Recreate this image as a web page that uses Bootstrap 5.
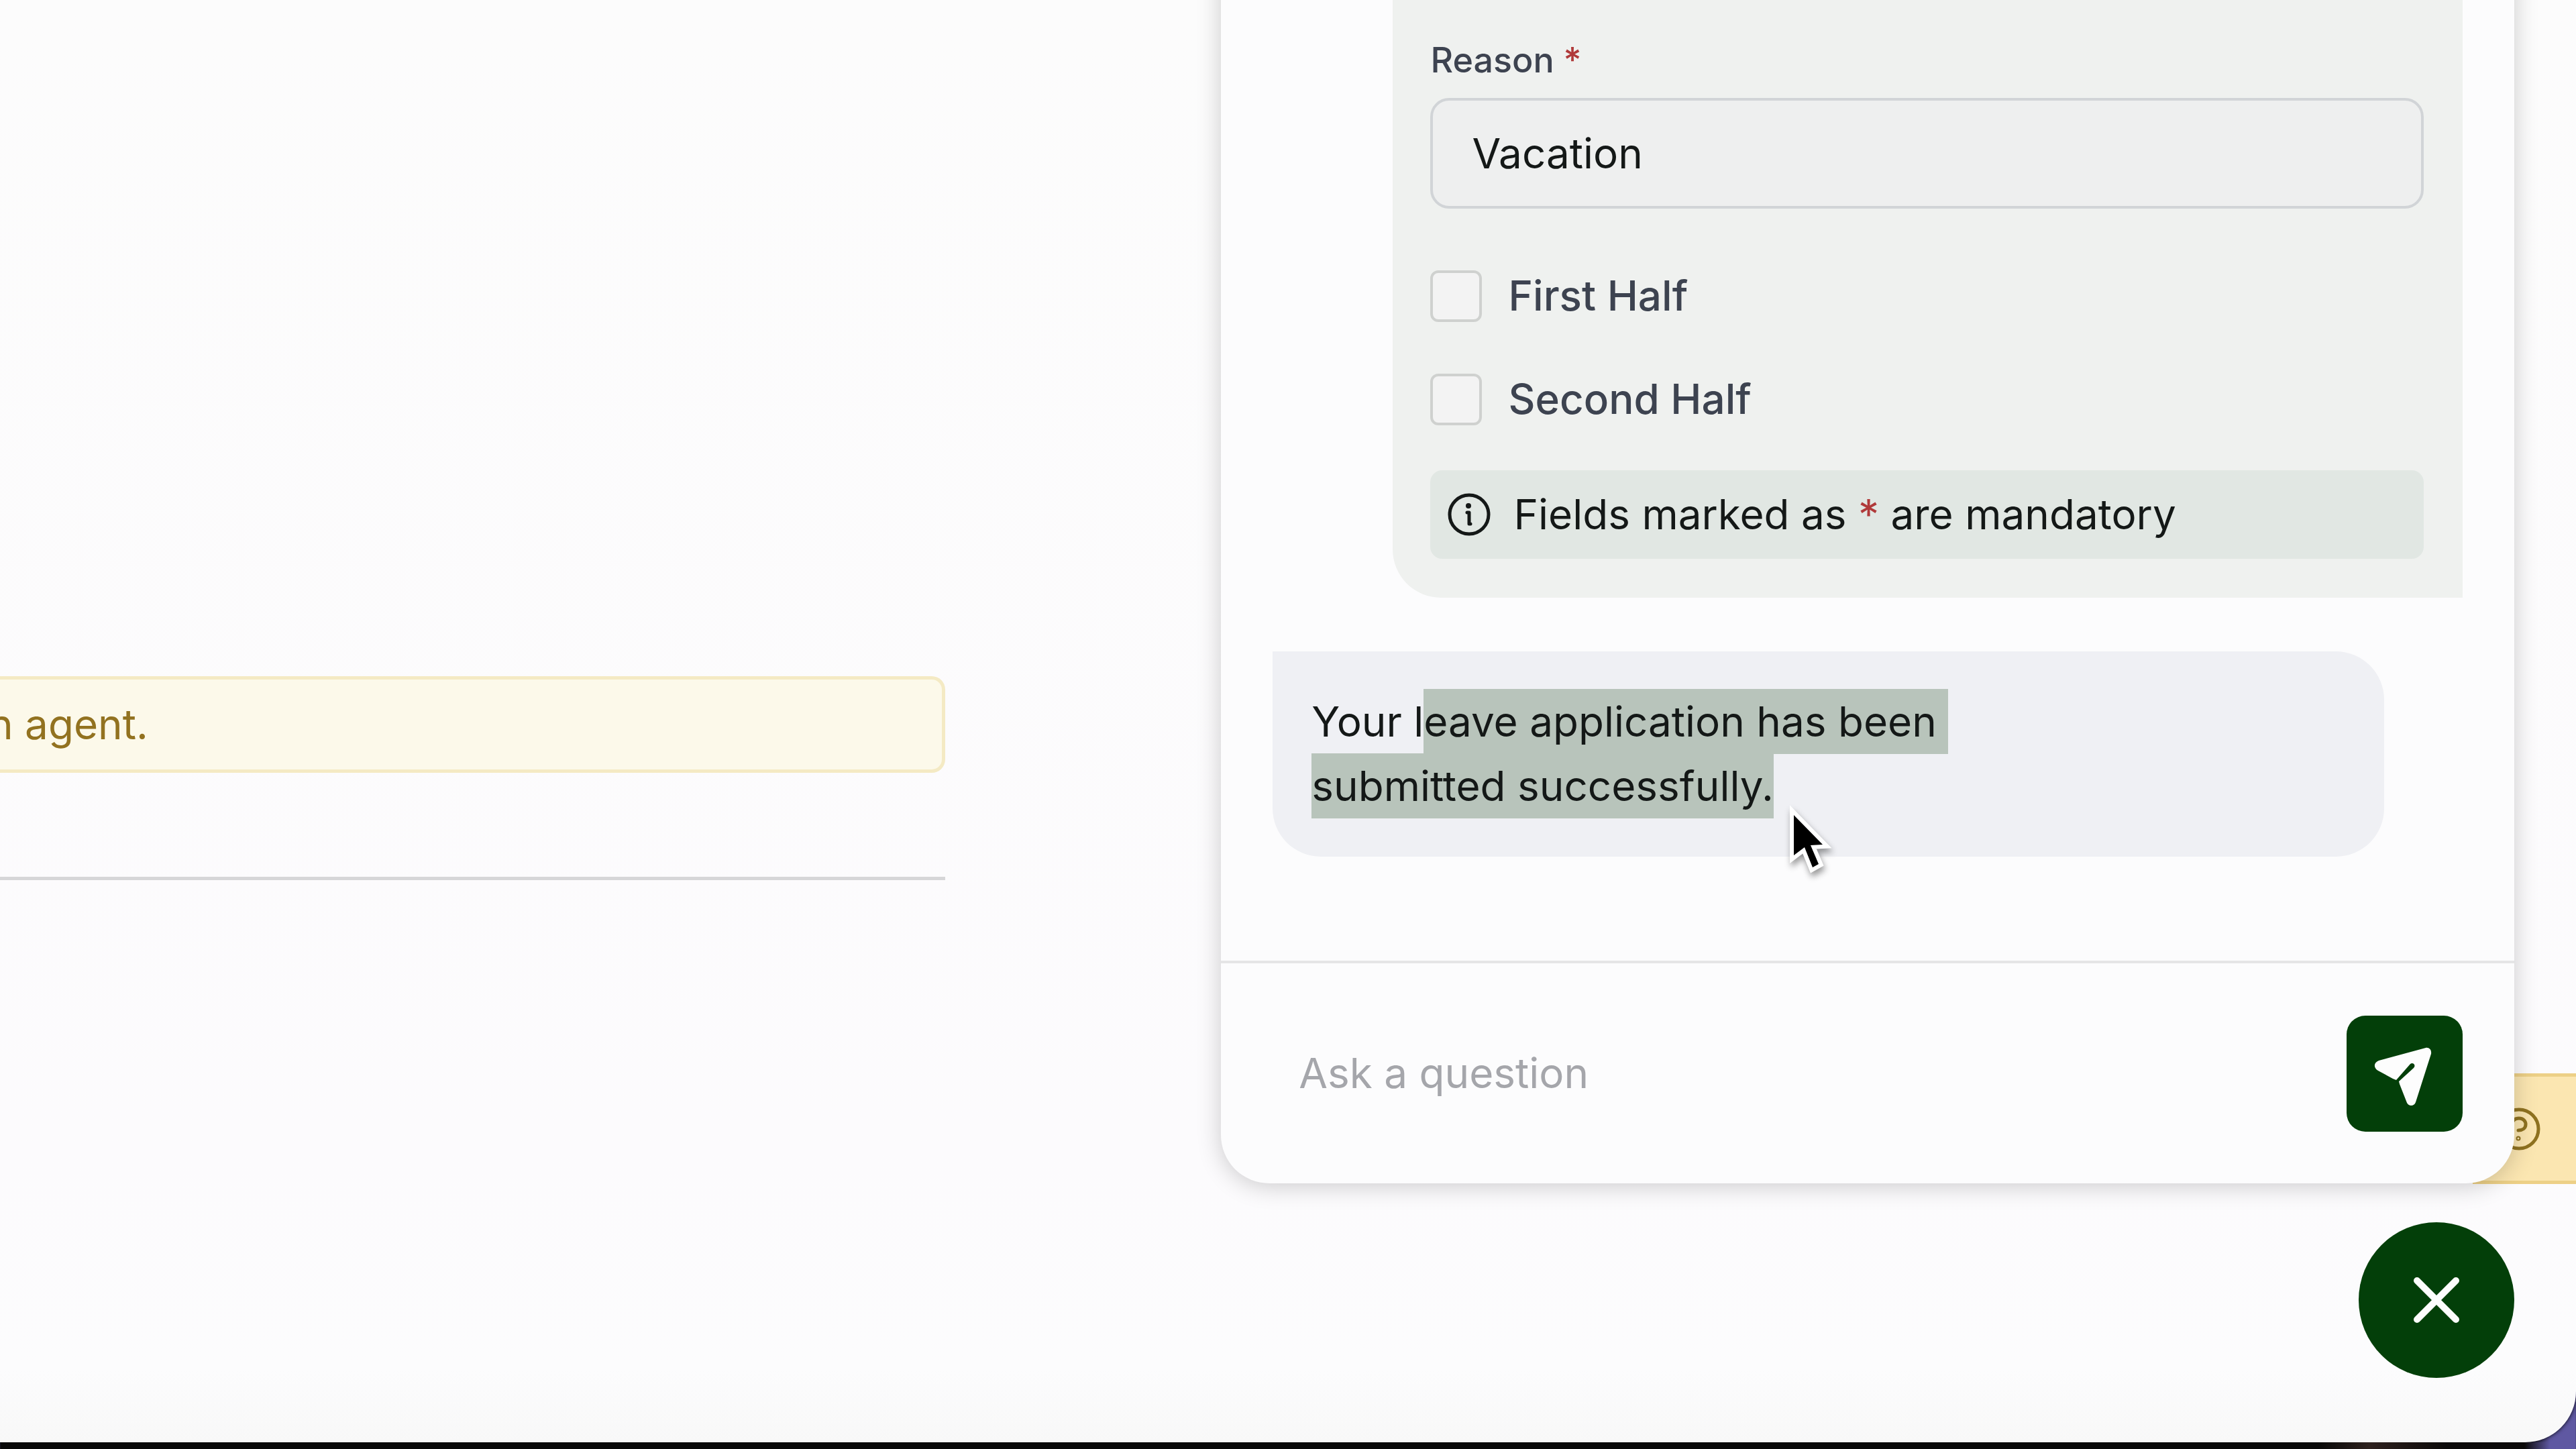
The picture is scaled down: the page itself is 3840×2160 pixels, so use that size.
<!DOCTYPE html>
<html lang="en">
<head>
<meta charset="utf-8">
<meta name="viewport" content="width=device-width, initial-scale=1">
<title>Leave assistant</title>
<link href="https://cdn.jsdelivr.net/npm/bootstrap@5.3.0/dist/css/bootstrap.min.css" rel="stylesheet">
<style>
:root { --brand: #033f09; --ink: #141817; --slate: #3d4350; --surface: #fcfcfd; }
body {
  font-family: Inter, "Liberation Sans", sans-serif;
  font-size: 62px; line-height: 96px; color: var(--ink);
  background: linear-gradient(90deg, #080808 0 90%, #2e211e 92%, #0b0909 95%, #0b0909 98%, #5f58a2 99%);
}
.app-window {
  height: calc(100vh - 10px); border-radius: 0 0 76px 0;
  background: linear-gradient(#fcfcfc, #fcfbfd 80%, #fcfcfd 95%, #f8f8f8);
  box-shadow: 0 0 6px #000;
}
.page-column { width: 36.7%; padding-top: 1008px; }
.agent-note {
  height: 144px; text-indent: -17px; color: #927220;
  background: #fcf9ea; border: 5px solid #f4eac4; border-left: 0; border-radius: 0 20px 20px 0;
}
.page-rule { margin: 155px 0 0; border-top: 5px solid #d6d6d8; opacity: 1; }
.help-tab {
  right: 0; top: 1600px; width: 154px; height: 165px; padding-left: 32px;
  color: #8f7220; background: #fbe6b1; border: 5px solid #edd087; border-right: 0;
}
.widget { width: 50.2%; right: 92px; padding-bottom: 96px; gap: 58px; }
.chat-panel {
  background: var(--surface); border-radius: 0 0 72px 72px; margin-top: -80px;
  box-shadow: 0 4px 36px rgba(0, 0, 0, .2);
}
.chat-log { padding: 0 77px 155px; gap: 80px; }
.bubble { padding: 58px; }
.bubble-user { width: 89.9%; padding-left: 56px; background: #eff1ef; border-radius: 0 0 0 72px; }
.bubble-bot { width: 93.4%; padding: 57px 58px; background: #eff0f4; border-radius: 0 72px 72px 72px; }
.field-label { font-size: 52px; line-height: 80px; font-weight: 500; color: var(--slate); margin-bottom: 16px; }
.required { color: #b03a3a; }
.bubble .reason-input {
  height: 165px; padding: 0 58px; font-size: 62px; line-height: 96px; color: var(--ink);
  background: #eeefef; border: 4px solid #d1d4d7; border-radius: 28px; margin-bottom: 82px;
}
.half-option { gap: 39px; margin-bottom: 58px; font-weight: 500; color: var(--slate); }
.half-option .form-check-input {
  width: 77px; height: 77px; margin: 0; background-color: #f3f3f3; border: 4px solid #cfd1cf; border-radius: 12px;
}
.field-hint { height: 132px; padding: 0 26px; gap: 34px; background: #e1e7e3; border-radius: 18px; }
.picked { background: #b8c4bb; padding: 11px 0; -webkit-box-decoration-break: clone; box-decoration-break: clone; }
.composer { height: 332px; padding: 0 77px; border-top: 4px solid #e5e5e6; }
.composer .question-input {
  padding: 0 39px; font-size: 62px; line-height: 96px; color: var(--ink); background: transparent; border: 0;
}
.question-input::placeholder { color: #a5a6ab; opacity: 1; }
.send-btn { width: 173px; height: 173px; border-radius: 28px; }
.close-btn { width: 232px; height: 232px; }
.send-btn, .close-btn, .send-btn:hover, .close-btn:hover { background: var(--brand); color: #fdfdfd; border: 0; }
.pointer { left: 2656px; top: 1194px; filter: drop-shadow(2px 6px 5px rgba(0, 0, 0, .4)); }
</style>
</head>
<body class="overflow-hidden">
<div class="app-window position-relative overflow-hidden">
  <main class="page-column">
    <div class="agent-note d-flex align-items-center" role="status">n agent.</div>
    <hr class="page-rule">
  </main>

  <button type="button" class="help-tab position-absolute d-flex align-items-center" aria-label="Help">
    <svg width="64" height="64" viewBox="0 0 64 64" fill="none" stroke="currentColor" stroke-width="5" stroke-linecap="round" aria-hidden="true">
      <circle cx="32" cy="32" r="29"/>
      <path d="M22 25c0-6 4-9 10-9s10 4 10 9c0 6-5 9-11 9"/>
      <circle cx="31" cy="46" r="1"/>
    </svg>
  </button>

  <aside class="widget position-absolute top-0 bottom-0 d-flex flex-column align-items-end">
    <section class="chat-panel w-100 flex-grow-1 d-flex flex-column overflow-hidden" aria-label="Chat">
      <div class="chat-log flex-grow-1 d-flex flex-column justify-content-end">
        <form class="bubble bubble-user flex-grow-1 d-flex flex-column justify-content-end align-self-end">
          <label class="field-label" for="reason">Reason <span class="required">*</span></label>
          <input class="form-control reason-input" id="reason" type="text" value="Vacation">
          <div class="half-option d-flex align-items-center">
            <input class="form-check-input" type="checkbox" id="firstHalf">
            <label for="firstHalf">First Half</label>
          </div>
          <div class="half-option d-flex align-items-center">
            <input class="form-check-input" type="checkbox" id="secondHalf">
            <label for="secondHalf">Second Half</label>
          </div>
          <div class="field-hint d-flex align-items-center">
            <svg width="64" height="64" viewBox="0 0 64 64" fill="none" stroke="currentColor" stroke-width="5" stroke-linecap="round" stroke-linejoin="round" aria-hidden="true">
              <circle cx="32" cy="32" r="29"/>
              <path d="M29 29h3v17h2"/>
              <circle cx="31" cy="19" r="4" fill="currentColor" stroke="none"/>
            </svg>
            <span>Fields marked as <span class="required">*</span> are mandatory</span>
          </div>
        </form>
        <p class="bubble bubble-bot mb-0">Your l<span class="picked">eave application has been&nbsp;<br>submitted successfully.</span></p>
      </div>
      <form class="composer d-flex align-items-center">
        <input class="form-control question-input flex-grow-1" type="text" placeholder="Ask a question" aria-label="Ask a question">
        <button type="button" class="btn send-btn p-0 flex-shrink-0" aria-label="Send">
          <svg class="d-block" width="173" height="173" viewBox="0 0 173 173" aria-hidden="true">
            <path d="M118 48c5-1 9 3 8 9l-23 72c-2 6-10 7-13 1L79 102l-1-4 22-20c4-4-1-9-5-6L74 96l-5-2-22-12c-7-4-7-12 1-15z" fill="currentColor"/>
          </svg>
        </button>
      </form>
    </section>
    <button type="button" class="btn close-btn rounded-circle p-0 flex-shrink-0 d-flex align-items-center justify-content-center" aria-label="Close chat">
      <svg width="70" height="70" viewBox="0 0 70 70" stroke="currentColor" stroke-width="10" stroke-linecap="round" aria-hidden="true">
        <path d="M6 6l58 58M64 6L6 64"/>
      </svg>
    </button>
  </aside>

  <svg class="pointer position-absolute" width="84" height="120" viewBox="0 0 84 120" aria-hidden="true">
    <path d="M18 21V81L34 69 46 99 55 94 43 66 61 65z" fill="#000" stroke="#fff" stroke-width="12"/>
    <path d="M18 21V81L34 69 46 99 55 94 43 66 61 65z" fill="#000"/>
  </svg>
</div>
<script src="https://cdn.jsdelivr.net/npm/bootstrap@5.3.0/dist/js/bootstrap.bundle.min.js"></script>
</body>
</html>
